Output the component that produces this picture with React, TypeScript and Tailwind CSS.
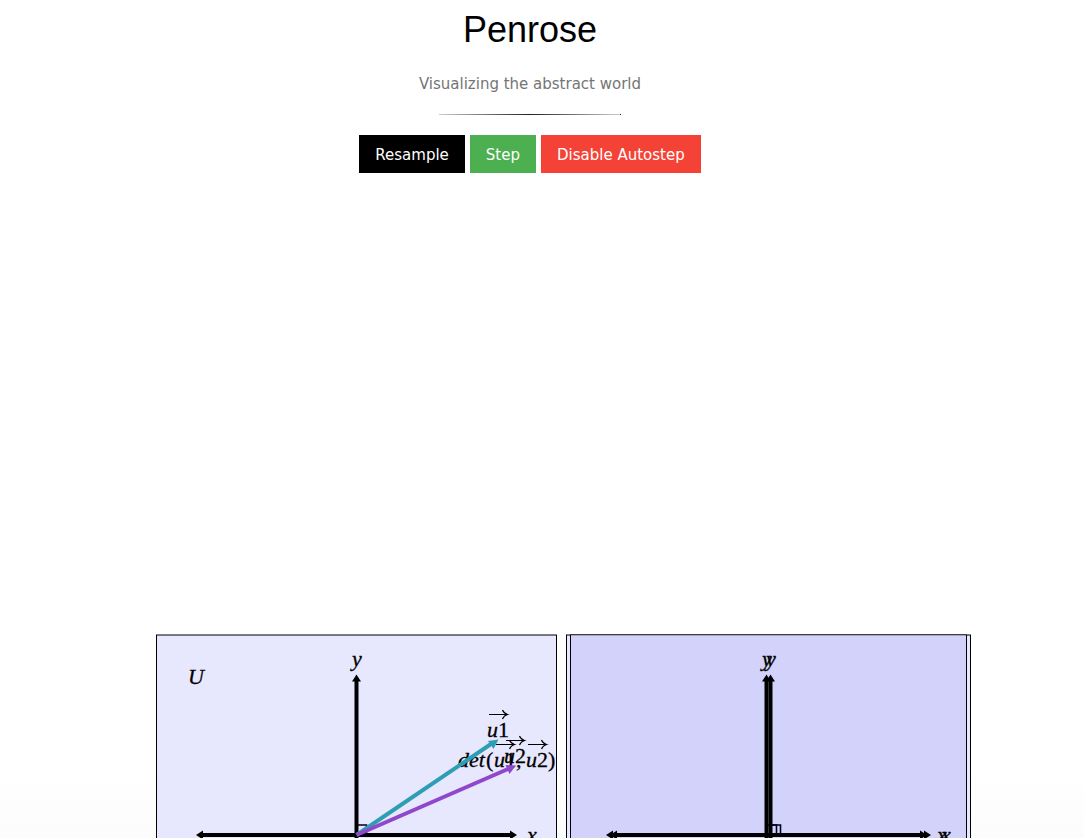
import type { ReactNode } from "react";

const INK = "#000";

function Axes({ cx, cy }: { cx: number; cy: number }) {
  return (
    <g fill={INK} stroke="none">
      <rect x={cx - 155} y={cy - 2} width="310" height="4" />
      <rect x={cx - 2} y={cy - 154} width="4" height="308" />
      <path d={`M${cx - 160.5} ${cy}l7 -4.5v9z`} />
      <path d={`M${cx + 160.5} ${cy}l-7 -4.5v9z`} />
      <path d={`M${cx} ${cy - 160.5}l-4.5 7h9z`} />
      <path d={`M${cx} ${cy + 160.5}l-4.5 -7h9z`} />
      <path d={`M${cx} ${cy - 10}h10v10`} fill="none" stroke="#000020" strokeWidth="1.6" />
    </g>
  );
}

function MathText({ x, y, children }: { x: number; y: number; children: ReactNode }) {
  return (
    <text x={x} y={y} fill={INK} fontSize="22" fontStyle="italic" stroke={INK} strokeWidth="0.3">
      {children}
    </text>
  );
}

function OverArrow({ x, y }: { x: number; y: number }) {
  return (
    <path
      d={`M${x} ${y}h18.5m-5 -4.5c1 2.5 2.5 3.8 5 4.5c-2.5 .7 -4 2 -5 4.5`}
      fill="none"
      stroke={INK}
      strokeWidth="1.2"
    />
  );
}

function Space({ x, width, fill }: { x: number; width: number; fill: string }) {
  return <rect x={x} y="635" width={width} height="400" fill={fill} stroke={INK} strokeWidth="1" />;
}

function Diagram() {
  return (
    <svg
      viewBox="0 173 1060 900"
      preserveAspectRatio="xMidYMin meet"
      className="block w-full font-['Liberation_Serif',serif]"
      role="img"
      aria-label="Vector spaces"
    >
      <Space x={156.5} width={400} fill="#e7e7fe" />
      <Axes cx={356.5} cy={835} />
      <MathText x={188} y={684}>U</MathText>
      <MathText x={352} y={666}>y</MathText>
      <MathText x={527} y={842}>x</MathText>

      <MathText x={458} y={767}>det</MathText>
      <MathText x={486} y={767}><tspan fontStyle="normal">(</tspan></MathText>
      <MathText x={494} y={767}>u<tspan fontStyle="normal">1,</tspan></MathText>
      <MathText x={526} y={767}>u<tspan fontStyle="normal">2)</tspan></MathText>
      <OverArrow x={496} y={744.5} />
      <OverArrow x={528} y={744.5} />

      <path d="M356.5 835L491 744" stroke="#2e9fb3" strokeWidth="4" />
      <path d="M498.500 739.500l-10.500 1.500l5.500 8z" fill="#2e9fb3" />
      <MathText x={487} y={737}>u<tspan fontStyle="normal">1</tspan></MathText>
      <OverArrow x={489} y={714.5} />

      <path d="M356.5 835L508 769" stroke="#8f47cc" strokeWidth="4" />
      <path d="M516 765.500l-10.500 -.5l4 9z" fill="#8f47cc" />
      <MathText x={504} y={763}>u<tspan fontStyle="normal">2</tspan></MathText>
      <OverArrow x={506} y={740.5} />

      <Space x={566.5} width={400} fill="#e7e7fe" />
      <Space x={570.5} width={400} fill="#e7e7fe" />
      <rect x="571" y="635.5" width="395.5" height="399" fill="#d3d2fa" />
      <path d="M966.5 635v400" stroke={INK} strokeWidth="1" />
      <Axes cx={766.5} cy={835} />
      <Axes cx={770.5} cy={835} />
      <MathText x={762} y={666}>y</MathText>
      <MathText x={766} y={666}>y</MathText>
      <MathText x={937} y={842}>x</MathText>
      <MathText x={941} y={842}>x</MathText>
    </svg>
  );
}

export default function App() {
  return (
    <main className="h-screen overflow-hidden bg-[linear-gradient(to_bottom,#fff_92%,#fcfcfc)] pr-6 font-['DejaVu_Sans',sans-serif] text-[15px]">
      <header className="flex flex-col items-center">
        <h1 className="mt-[3px] font-['Liberation_Sans',Arial,sans-serif] text-4xl leading-[54px] text-black">
          Penrose
        </h1>
        <p className="mt-4 leading-[22px] text-[#757575]">Visualizing the abstract world</p>
        <hr className="mt-[19px] h-px w-[182px] border-0 border-r border-[#222] bg-[linear-gradient(to_right,#ccc,#222,#ccc)]" />
        <div className="mt-5 flex gap-[5px] leading-[22px] text-white">
          <button type="button" className="bg-black px-4 pt-[9px] pb-[7px]">Resample</button>
          <button type="button" className="bg-[#4caf50] px-4 pt-[9px] pb-[7px]">Step</button>
          <button type="button" className="bg-[#f44336] px-4 pt-[9px] pb-[7px]">Disable Autostep</button>
        </div>
      </header>
      <Diagram />
    </main>
  );
}
